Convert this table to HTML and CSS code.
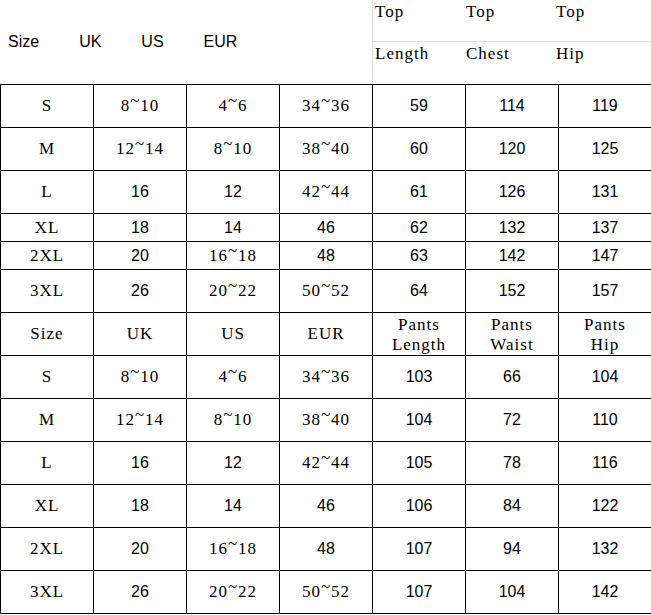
FILE: index.html
```html
<!DOCTYPE html>
<html>
<head>
<meta charset="utf-8">
<link rel="stylesheet" href="styles.css">
</head>
<body>
<div class="page">
  <div class="head">
    <div class="head-left">
      <span>Size</span><span>UK</span><span>US</span><span>EUR</span>
    </div>
    <div class="head-right">
      <div class="sub sub-top"><span class="c1">Top</span><span class="c2">Top</span><span>Top</span></div>
      <div class="sub sub-bot"><span class="c1">Length</span><span class="c2">Chest</span><span>Hip</span></div>
    </div>
  </div>
  <div class="grid">
    <div class="cell m">S</div><div class="cell m">8<span class="tl">~</span>10</div><div class="cell m">4<span class="tl">~</span>6</div><div class="cell m">34<span class="tl">~</span>36</div><div class="cell n">59</div><div class="cell n">114</div><div class="cell n">119</div>
    <div class="cell m">M</div><div class="cell m">12<span class="tl">~</span>14</div><div class="cell m">8<span class="tl">~</span>10</div><div class="cell m">38<span class="tl">~</span>40</div><div class="cell n">60</div><div class="cell n">120</div><div class="cell n">125</div>
    <div class="cell m">L</div><div class="cell n">16</div><div class="cell n">12</div><div class="cell m">42<span class="tl">~</span>44</div><div class="cell n">61</div><div class="cell n">126</div><div class="cell n">131</div>
    <div class="cell m">XL</div><div class="cell n">18</div><div class="cell n">14</div><div class="cell n">46</div><div class="cell n">62</div><div class="cell n">132</div><div class="cell n">137</div>
    <div class="cell m">2XL</div><div class="cell n">20</div><div class="cell m">16<span class="tl">~</span>18</div><div class="cell n">48</div><div class="cell n">63</div><div class="cell n">142</div><div class="cell n">147</div>
    <div class="cell m">3XL</div><div class="cell n">26</div><div class="cell m">20<span class="tl">~</span>22</div><div class="cell m">50<span class="tl">~</span>52</div><div class="cell n">64</div><div class="cell n">152</div><div class="cell n">157</div>

    <div class="cell m">Size</div><div class="cell m">UK</div><div class="cell m">US</div><div class="cell m">EUR</div><div class="cell m two">Pants<br>Length</div><div class="cell m two">Pants<br>Waist</div><div class="cell m two">Pants<br>Hip</div>
    <div class="cell m">S</div><div class="cell m">8<span class="tl">~</span>10</div><div class="cell m">4<span class="tl">~</span>6</div><div class="cell m">34<span class="tl">~</span>36</div><div class="cell n">103</div><div class="cell n">66</div><div class="cell n">104</div>
    <div class="cell m">M</div><div class="cell m">12<span class="tl">~</span>14</div><div class="cell m">8<span class="tl">~</span>10</div><div class="cell m">38<span class="tl">~</span>40</div><div class="cell n">104</div><div class="cell n">72</div><div class="cell n">110</div>
    <div class="cell m">L</div><div class="cell n">16</div><div class="cell n">12</div><div class="cell m">42<span class="tl">~</span>44</div><div class="cell n">105</div><div class="cell n">78</div><div class="cell n">116</div>
    <div class="cell m">XL</div><div class="cell n">18</div><div class="cell n">14</div><div class="cell n">46</div><div class="cell n">106</div><div class="cell n">84</div><div class="cell n">122</div>
    <div class="cell m">2XL</div><div class="cell n">20</div><div class="cell m">16<span class="tl">~</span>18</div><div class="cell n">48</div><div class="cell n">107</div><div class="cell n">94</div><div class="cell n">132</div>
    <div class="cell m">3XL</div><div class="cell n">26</div><div class="cell m">20<span class="tl">~</span>22</div><div class="cell m">50<span class="tl">~</span>52</div><div class="cell n">107</div><div class="cell n">104</div><div class="cell n">142</div>
  </div>
</div>
</body>
</html>
```

FILE: styles.css
```css
html, body {
  margin: 0;
  padding: 0;
  background: #fff;
  overflow: hidden;
}
body {
  width: 651px;
  height: 615px;
  color: #000;
  font-family: "Liberation Sans", Arial, sans-serif;
}
.page {
  width: 652px;
}
.head {
  display: flex;
  height: 84px;
}
.head-left {
  width: 372px;
  display: flex;
  align-items: center;
  gap: 40px;
  padding-left: 8px;
  box-sizing: border-box;
  font-size: 16px;
}
.head-right {
  width: 280px;
  border-left: 1px solid #dedede;
  box-sizing: border-box;
}
.sub {
  display: flex;
  padding-left: 2px;
  padding-top: 3px;
  box-sizing: border-box;
  font-family: "Liberation Serif", "Times New Roman", serif;
  font-size: 17px;
  letter-spacing: 1px;
  line-height: 17px;
}
.sub-top {
  height: 42px;
  border-bottom: 1px solid #dedede;
}
.sub-bot {
  height: 42px;
}
.c1 { width: 91px; }
.c2 { width: 90px; }
.grid {
  display: grid;
  grid-template-columns: repeat(7, 93px);
  grid-template-rows: 43px 43px 43px 28px 28px 43px 43px 43px 43px 43px 43px 43px 43px;
  border-top: 1px solid #000;
  border-left: 1px solid #000;
}
.cell {
  display: flex;
  align-items: center;
  justify-content: center;
  text-align: center;
  border-right: 1px solid #000;
  border-bottom: 1px solid #000;
  box-sizing: border-box;
  white-space: nowrap;
}
.n {
  font-family: "Liberation Sans", Arial, sans-serif;
  font-size: 16px;
}
.m {
  font-family: "Liberation Serif", "Times New Roman", serif;
  font-size: 17px;
  letter-spacing: 1px;
}
.two {
  line-height: 20px;
  padding-top: 2px;
}
.tl {
  display: inline-block;
  transform: translateY(-5px);
}
```
